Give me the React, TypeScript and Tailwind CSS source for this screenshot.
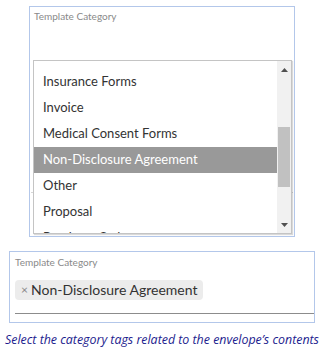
const items = [
  "Insurance Forms",
  "Invoice",
  "Medical Consent Forms",
  "Non-Disclosure Agreement",
  "Other",
  "Proposal",
  "Purchase Order",
];

function ScrollArrow({ up }: { up?: boolean }) {
  return (
    <svg width="7" height="4" viewBox="0 0 7 4">
      <path d={up ? "M0 4 L3.5 0 L7 4 Z" : "M0 0 L3.5 4 L7 0 Z"} fill="#505050" />
    </svg>
  );
}

export default function App() {
  return (
    <div className="w-[324px] h-[357px] bg-white overflow-hidden" style={{ fontFamily: "Lato, 'Open Sans', sans-serif" }}>
      {/* open state */}
      <div className="pt-[6px] pl-[29px]">
        <div className="relative w-[266px] h-[231px] border border-[#b3c7ea]">
          <div className="pl-[4px] pt-[2px] text-[10px] leading-[14px] text-[#8a8a8a]">Template Category</div>
          <div className="mt-[169px] mx-[1px] border-b border-[#d6d6d6]" />
          <div className="absolute left-[3px] top-[53px] w-[259px] h-[174px] border border-[#c4c4c4] bg-white shadow-[1px_1px_1px_rgba(0,0,0,0.15)] flex overflow-hidden">
            <div className="flex-1 pt-[8px]">
              {items.map((it) => (
                <div
                  key={it}
                  className={`h-[26px] flex items-center pl-[9px] text-[13px] ${
                    it === "Non-Disclosure Agreement" ? "bg-[#999999] text-white" : "text-[#333333]"
                  }`}
                >
                  {it}
                </div>
              ))}
            </div>
            <div className="w-[14px] bg-[#f1f1f1] flex flex-col items-center">
              <div className="h-[17px] flex items-center"><ScrollArrow up /></div>
              <div className="mt-[49px] w-[12px] h-[60px] bg-[#c1c1c1]" />
              <div className="flex-1" />
              <div className="h-[17px] flex items-center"><ScrollArrow /></div>
            </div>
          </div>
        </div>
      </div>

      {/* selected state */}
      <div className="pt-[14px] pl-[9px]">
        <div className="w-[306px] h-[72px] border border-[#b3c7ea] overflow-hidden">
          <div className="pl-[5px] pt-[3px] text-[10px] leading-[14px] text-[#8a8a8a]">Template Category</div>
          <div className="ml-[5px] mt-[11px] pb-[13px] border-b border-[#8c8c8c] flex">
            <span className="inline-flex items-center h-[20px] pl-[6px] pr-[6px] rounded-[4px] bg-[#ececec] text-[14px] leading-[20px] text-[#333333]">
              <span className="text-[12px] text-[#888888] mr-[3px]">×</span>
              Non-Disclosure Agreement
            </span>
          </div>
        </div>
      </div>

      <div className="pl-[5px] pt-[8px] text-[12.4px] italic text-[#1c1c8e] whitespace-nowrap" style={{ fontFamily: "'Open Sans', sans-serif" }}>
        Select the category tags related to the envelope’s contents
      </div>
    </div>
  );
}
